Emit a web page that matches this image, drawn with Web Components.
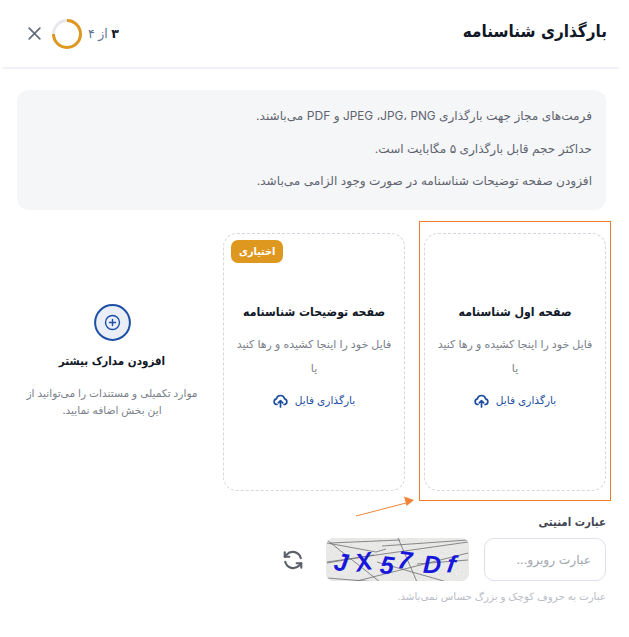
<!DOCTYPE html>
<html lang="fa" dir="rtl"><head><meta charset="utf-8"><title>بارگذاری شناسنامه</title>
<style>
html,body{margin:0;padding:0;background:#fff}
body{width:629px;height:637px;overflow:hidden;font-family:"Inter","Noto Sans","DejaVu Sans",sans-serif;color:#111827}
</style></head><body>
<upload-app></upload-app>
<script>
const COND='"DejaVu Sans Condensed","DejaVu Sans",sans-serif';
function def(name,css,html){
  customElements.define(name,class extends HTMLElement{
    constructor(){super();const r=this.attachShadow({mode:'open'});
      const t=document.createElement('template');t.innerHTML='<style>'+css+'</style>'+(typeof html==='function'?html(this):html);
      r.appendChild(t.content.cloneNode(true));}
  });
}
def('modal-header',`
:host{display:flex;align-items:center;justify-content:space-between;margin:0 10px 0 3px;padding:0 12px 0 24px;border-bottom:2px solid #f0f0f5;box-sizing:border-box;height:69px}
h1{margin:0 0 4px;font:700 17px/1 ${COND};color:#111827}
.l{display:flex;align-items:center;direction:ltr}
.t{font-size:12.5px;color:#5f7390;direction:rtl;margin-left:6px}
b{color:#111827;font-weight:700}
svg{display:block}
`,`<h1>بارگذاری شناسنامه</h1><div class="l">
<svg width="13" height="13" viewBox="0 0 13 13" style="margin:0 11px 0 1px"><path d="M1.2 1.2 11.8 11.8M11.8 1.2 1.2 11.8" stroke="#667080" stroke-width="1.8" stroke-linecap="round"/></svg>
<svg width="30" height="30" viewBox="0 0 30 30"><circle cx="15" cy="15" r="13.5" fill="none" stroke="#e6e8ec" stroke-width="3"/><path d="M15 1.5A13.5 13.5 0 1 1 1.5 15" fill="none" stroke="#df981f" stroke-width="3"/></svg>
<span class="t"><b>۳</b> از ۴</span></div>`);
def('info-box',`
:host{display:block;box-sizing:border-box;background:#f5f6f8;border-radius:12px;margin:21px 23px 0 17px;padding:10px 14px 0;color:#60646e;font-size:12.1px;height:120px}
p{margin:0;line-height:32.5px;height:32.5px;white-space:nowrap}
bdi{font-size:11.8px}
`,`<p>فرمت‌های مجاز جهت بارگذاری <bdi dir="ltr">JPEG ،JPG، PNG</bdi> و PDF می‌باشند.</p><p>حداکثر حجم قابل بارگذاری ۵ مگابایت است.</p><p>افزودن صفحه توضیحات شناسنامه در صورت وجود الزامی می‌باشد.</p>`);
def('upload-card',`
:host{display:flex;flex-direction:column;align-items:center;box-sizing:border-box;width:182px;height:258px;border:1px dashed #d3d7df;border-radius:14px;position:relative;padding-top:69px}
h2{margin:0;font:700 12.2px/18px ${COND};color:#111827;white-space:nowrap}
.d{margin:11px 0 0;font-size:11px;line-height:24px;color:#7a7f8a;white-space:nowrap;text-align:center}
.u{display:flex;align-items:center;gap:7px;margin-top:11px;color:#1e4f9f;font-size:10.6px;line-height:20px}
svg{display:block}
.tag{position:absolute;top:6px;left:7px;background:#df981f;color:#fff;font:700 10.8px/23px ${COND};height:23px;padding:0 8px;border-radius:7px}
:host(:not([optional])) .tag{display:none}
`,el=>`<span class="tag">اختیاری</span><h2>${el.getAttribute('heading')}</h2><p class="d">فایل خود را اینجا کشیده و رها کنید<br>یا</p>
<div class="u"><span>بارگذاری فایل</span><svg width="15" height="14" viewBox="0 0 15 14" fill="none" stroke="#1e4f9f" stroke-width="1.7" stroke-linecap="round" stroke-linejoin="round"><path d="M4 10.5H3.6A2.9 2.9 0 0 1 3.4 4.8 4.2 4.2 0 0 1 11.6 4.8 2.9 2.9 0 0 1 11.4 10.5H11"/><path d="M7.5 13V7M5.3 8.8 7.5 6.6 9.7 8.8"/></svg></div>`);
def('add-more',`
:host{display:flex;flex-direction:column;align-items:center;width:184px;height:258px;box-sizing:border-box;padding-top:71px}
svg{display:block}
h2{margin:11px 0 0;font:700 11.5px/18px ${COND};color:#111827;white-space:nowrap}
p{margin:15px 0 0;font-size:10.6px;line-height:17px;color:#7a7f8a;text-align:center;width:172px}
`,`<svg width="37" height="37" viewBox="0 0 37 37"><circle cx="18.5" cy="18.5" r="17.4" fill="#e9eef7" stroke="#1e4fa6" stroke-width="2"/><circle cx="18.5" cy="18.5" r="7" fill="none" stroke="#1e4fa6" stroke-width="1.4"/><path d="M18.5 15.5v6M15.5 18.5h6" stroke="#1e4fa6" stroke-width="1.4" stroke-linecap="round"/></svg>
<h2>افزودن مدارک بیشتر</h2><p>موارد تکمیلی و مستندات را می‌توانید از این بخش اضافه نمایید.</p>`);
def('captcha-image',`
:host{display:block;width:143px;height:43px;border-radius:8px;overflow:hidden;background:#ececec}
svg{display:block;direction:ltr}
text{font:italic 700 25px "Liberation Sans",sans-serif;fill:#1717dc}
`,`<svg width="143" height="43" viewBox="0 0 143 43">
<filter id="n"><feTurbulence type="fractalNoise" baseFrequency="1.1" numOctaves="2" seed="4"/><feColorMatrix values="0 0 0 0 .5 0 0 0 0 .5 0 0 0 0 .5 0 0 0 .5 -.12"/></filter>
<rect width="143" height="43" fill="#efefed"/><rect width="143" height="43" filter="url(#n)"/>
<g fill="none" stroke="#6e6e72" stroke-width=".8">
<path d="M1 2 54 44M4 5 74 2M1 5 50 14 60 11M72 0 91 44M1 24 142 4M1 25 48 17M27 44 142 15M51 24 121 44M1 40 51 44M56 8 142 2M91 26 142 22"/>
</g>
<text x="8" y="33" transform="rotate(8 16 25)">J</text>
<text x="29" y="32" transform="rotate(-10 40 22)">X</text>
<text x="54" y="36" transform="rotate(6 62 28)">5</text>
<text x="72" y="31" transform="rotate(8 80 21)">7</text>
<text x="97" y="35" transform="rotate(2 106 27)">D</text>
<text x="121" y="35" transform="rotate(8 127 27)">f</text>
</svg>`);
def('captcha-field',`
:host{display:block;margin:22px 23px 0 0;font-size:12px}
label{display:block;font:700 11.4px/18px ${COND};color:#3f4652}
.r{display:flex;align-items:center;margin-top:7px}
.i{box-sizing:border-box;width:122px;height:43px;border:1px solid #dde1ea;border-radius:10px;display:flex;align-items:center;padding:0 14px;color:#a0a5af;font-size:12.3px}
captcha-image{margin-right:15px}
svg{display:block;margin-right:22px}
.h{margin:7px 0 0;font-size:10.3px;line-height:16px;color:#b9bdc7}
`,`<label>عبارت امنیتی</label><div class="r"><div class="i">عبارت روبرو...</div><captcha-image></captcha-image>
<svg width="22" height="22" viewBox="0 0 24 24" fill="none" stroke="#5a6068" stroke-width="2.3" stroke-linecap="round" stroke-linejoin="round"><path d="M20.5 10A9 9 0 0 0 5 6.2L3 8.5"/><path d="M3 3.5v5h5"/><path d="M3.5 14A9 9 0 0 0 19 17.8l2-2.3"/><path d="M21 20.5v-5h-5"/></svg></div>
<p class="h">عبارت به حروف کوچک و بزرگ حساس نمی‌باشد.</p>`);
def('upload-app',`
:host{display:block;position:relative;width:629px;height:637px}
.cards{display:flex;gap:19px;margin:23px 23px 0 0}
.mark{position:absolute;left:419px;top:221px;width:192px;height:280px;box-sizing:border-box;border:1px solid #f07b2b}
.arrow{position:absolute;left:350px;top:495px}
`,`<modal-header></modal-header><info-box></info-box>
<div class="cards"><upload-card heading="صفحه اول شناسنامه"></upload-card><upload-card heading="صفحه توضیحات شناسنامه" optional></upload-card><add-more></add-more></div>
<captcha-field></captcha-field>
<div class="mark"></div>
<svg class="arrow" width="70" height="26" viewBox="0 0 70 26"><path d="M6 21 56 8" stroke="#f0853a" stroke-width="1"/><path d="M64 5 54 1.6 56.6 11Z" fill="#f0853a"/></svg>`);
</script></body></html>
